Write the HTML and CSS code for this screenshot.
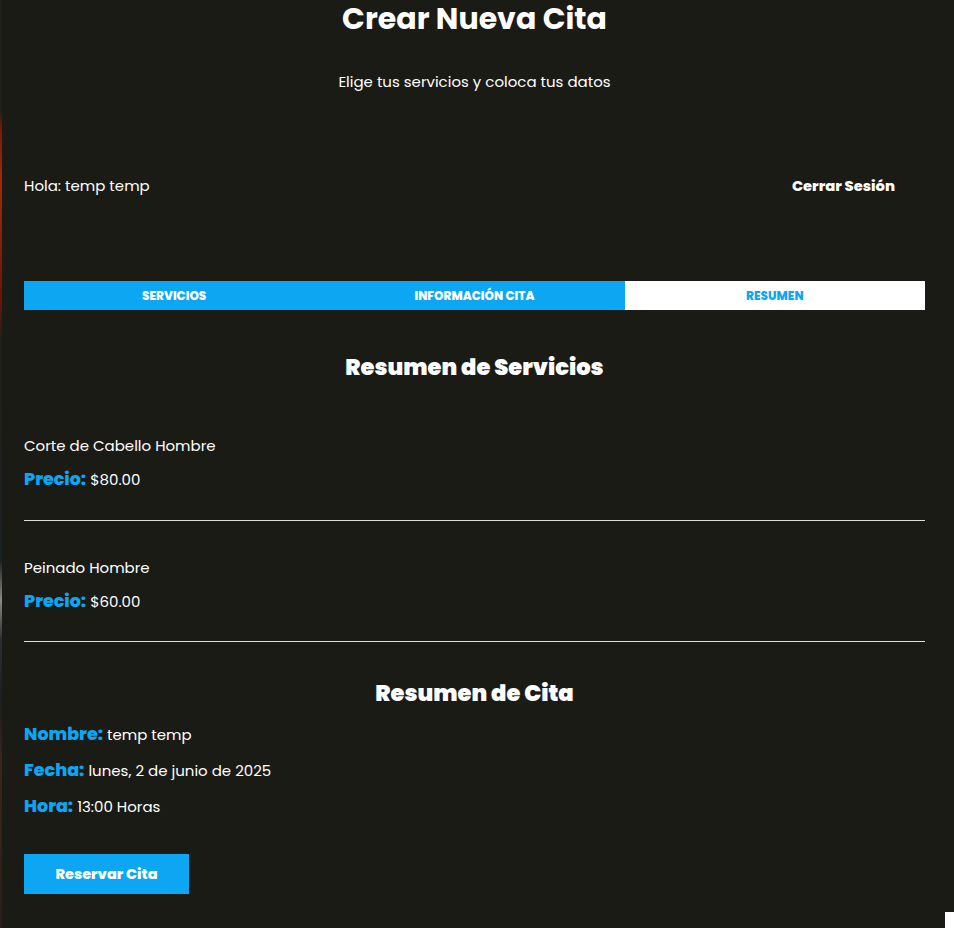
FILE: index.html
```html
<!DOCTYPE html>
<html lang="es">
<head>
<meta charset="UTF-8">
<title>Crear Nueva Cita</title>
<link rel="stylesheet" href="styles.css">
</head>
<body>
<div class="edge"></div>
<main class="app">
  <h1 class="title">Crear Nueva Cita</h1>
  <p class="subtitle">Elige tus servicios y coloca tus datos</p>

  <div class="bar">
    <p class="hello">Hola: temp temp</p>
    <a class="logout" href="#">Cerrar Sesión</a>
  </div>

  <nav class="tabs">
    <button class="tab" type="button">Servicios</button>
    <button class="tab" type="button">Información Cita</button>
    <button class="tab tab-active" type="button">Resumen</button>
  </nav>

  <section class="summary">
    <h2 class="heading">Resumen de Servicios</h2>

    <div class="services">
      <div class="service">
        <p class="service-name">Corte de Cabello Hombre</p>
        <p class="line"><span class="label">Precio:</span> $80.00</p>
      </div>
      <div class="service">
        <p class="service-name">Peinado Hombre</p>
        <p class="line"><span class="label">Precio:</span> $60.00</p>
      </div>
    </div>

    <h2 class="heading heading-cita">Resumen de Cita</h2>
    <div class="details">
      <p class="line"><span class="label">Nombre:</span> temp temp</p>
      <p class="line"><span class="label">Fecha:</span> lunes, 2 de junio de 2025</p>
      <p class="line"><span class="label">Hora:</span> 13:00 Horas</p>
    </div>

    <button class="reserve" type="button">Reservar Cita</button>
  </section>
</main>
<div class="corner"></div>
</body>
</html>
```
FILE: styles.css
```css
* { box-sizing: border-box; }

html, body {
  margin: 0;
  padding: 0;
  background: #1b1b16;
  color: #ffffff;
  font-family: "Poppins", Inter, "Open Sans", sans-serif;
}

body { min-height: 928px; }

p { margin: 0; }

.edge {
  position: fixed;
  left: 0;
  top: 0;
  width: 2px;
  height: 100%;
  background: linear-gradient(to bottom,
    #1f1f1a 0, #1f1f1a 110px,
    #7a1a0c 130px, #a02a10 180px, #6a140a 300px, #1f1f1a 340px,
    #1a2222 560px, #8a8a80 600px, #2a3030 640px,
    #1a1f1f 700px, #3a241c 760px, #2c1e18 928px);
}

.corner {
  position: fixed;
  right: 0;
  bottom: 0;
  width: 9px;
  height: 16px;
  background: #ffffff;
}

.app {
  padding: 2px 29px 40px 24px;
}

.title {
  margin: 0;
  text-align: center;
  font-size: 30px;
  line-height: 34px;
  font-weight: 700;
}

.subtitle {
  margin-top: 36px;
  text-align: center;
  font-size: 15px;
  line-height: 20px;
  font-weight: 400;
}

.bar {
  margin-top: 84px;
  display: flex;
  justify-content: space-between;
  align-items: center;
  padding-right: 30px;
}

.hello {
  font-size: 15px;
  line-height: 20px;
}

.logout {
  color: #ffffff;
  text-decoration: none;
  font-size: 14.7px;
  line-height: 20px;
  font-weight: 800;
}

.tabs {
  margin-top: 85px;
  display: grid;
  grid-template-columns: repeat(3, 1fr);
}

.tab {
  height: 29px;
  border: 0;
  margin: 0;
  padding: 0;
  background: #0da6f3;
  color: #ffffff;
  font-family: inherit;
  font-size: 12px;
  font-weight: 800;
  text-transform: uppercase;
}

.tab-active {
  background: #ffffff;
  color: #0da6f3;
}

.heading {
  margin: 42px 0 0;
  text-align: center;
  font-size: 22.6px;
  line-height: 30px;
  font-weight: 900;
}

.services {
  margin-top: 54px;
  display: flex;
  flex-direction: column;
}

.service {
  display: flex;
  flex-direction: column;
  gap: 12px;
  padding-bottom: 28px;
  border-bottom: 1px solid #dcdcdc;
}

.service + .service {
  padding-top: 37px;
  padding-bottom: 27px;
}

.service-name {
  font-size: 15px;
  line-height: 20px;
}

.line {
  font-size: 15px;
  line-height: 24px;
}

.label {
  color: #0da6f3;
  font-size: 17.5px;
  line-height: 1;
  font-weight: 800;
}

.heading-cita {
  margin-top: 36px;
}

.details {
  margin-top: 15px;
  display: flex;
  flex-direction: column;
  gap: 12px;
}

.reserve {
  margin-top: 35px;
  width: 165px;
  height: 40px;
  border: 0;
  padding: 0;
  background: #0da6f3;
  color: #ffffff;
  font-family: inherit;
  font-size: 14.5px;
  font-weight: 800;
}
```
